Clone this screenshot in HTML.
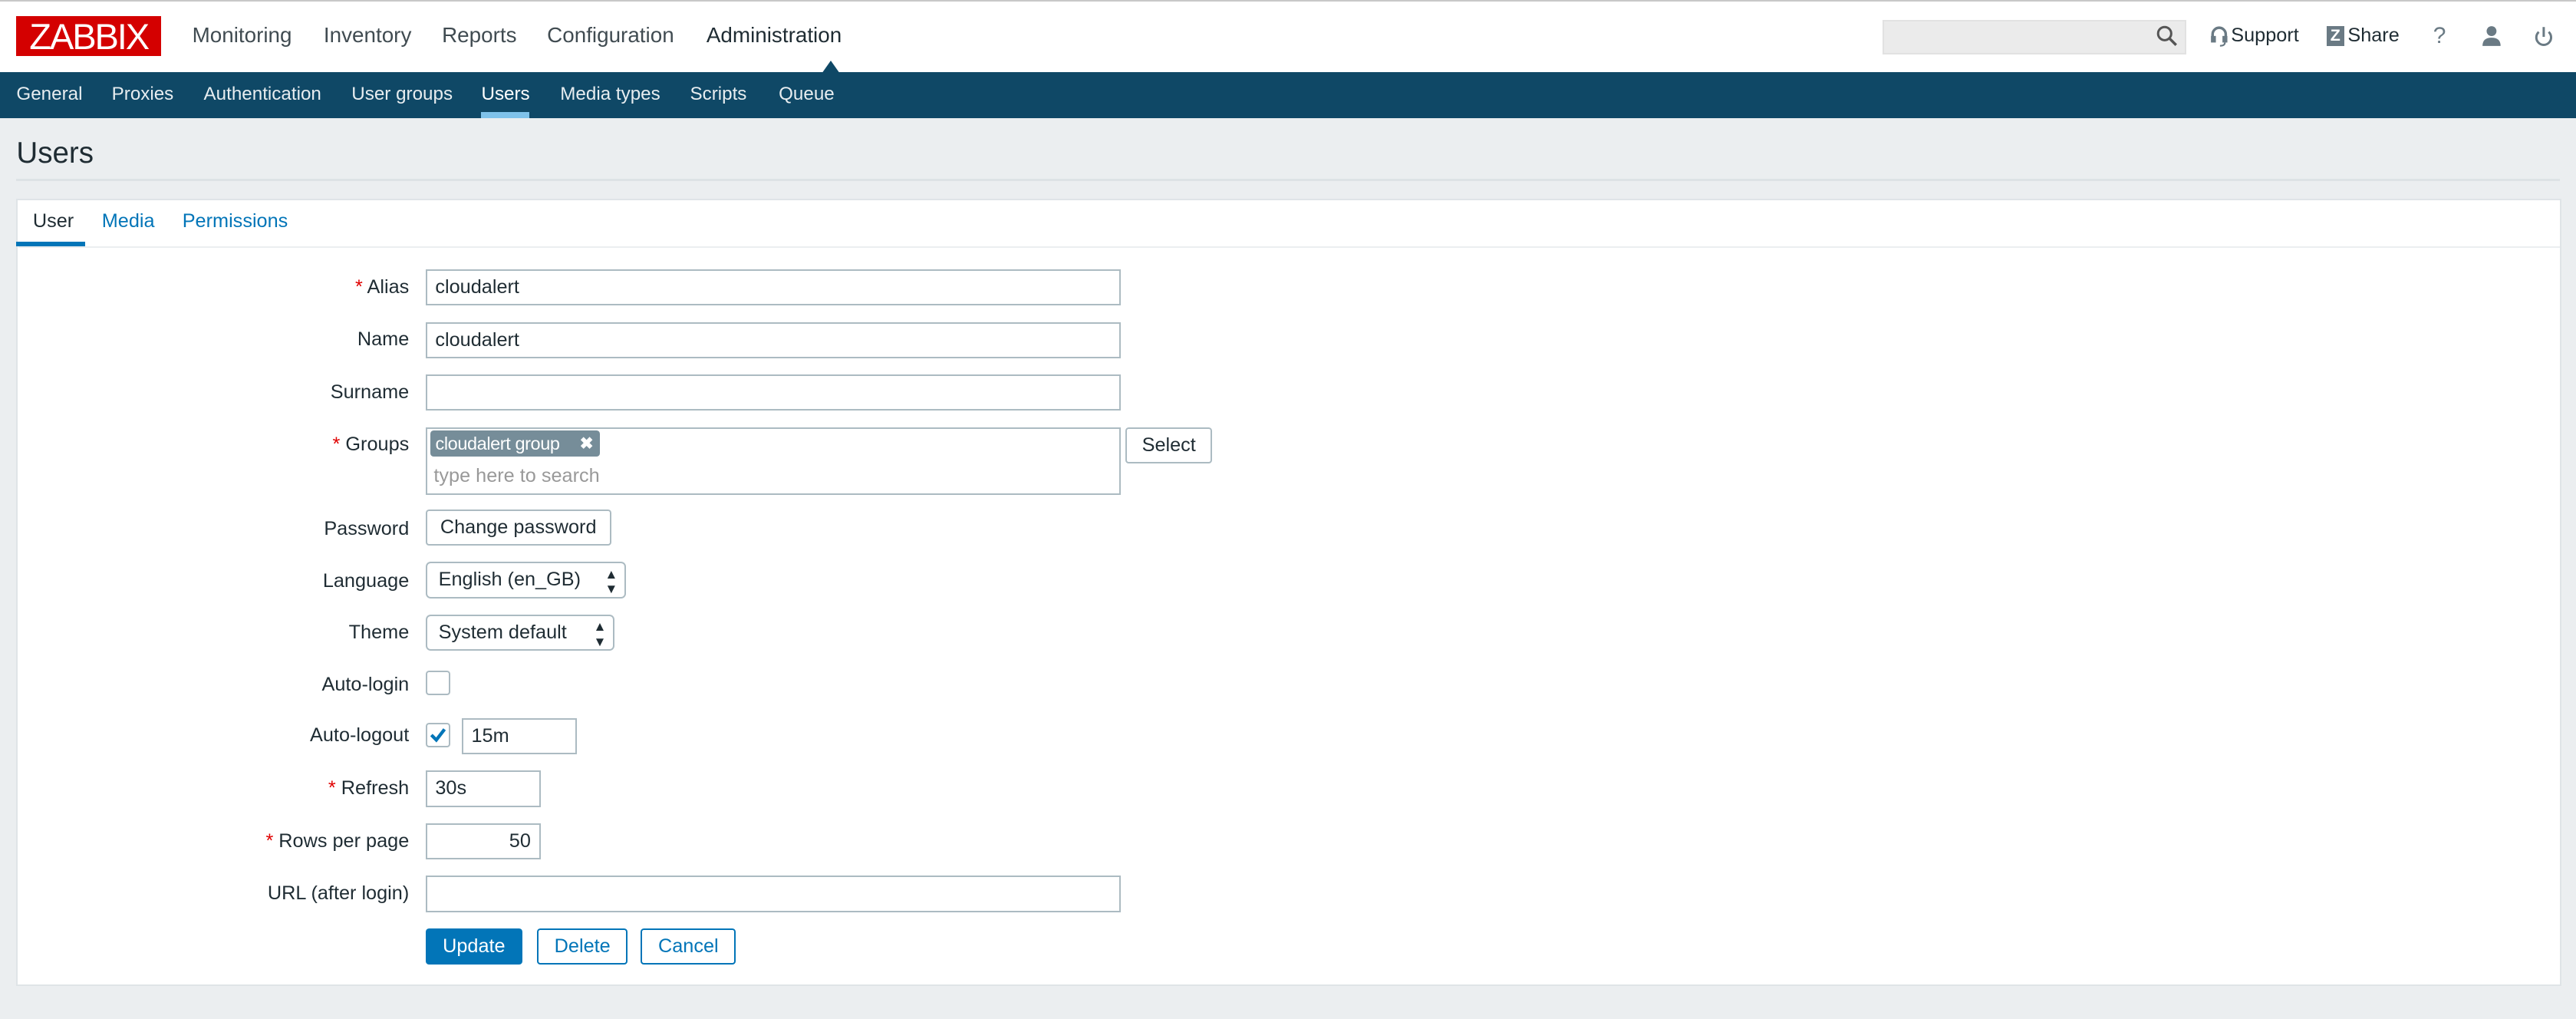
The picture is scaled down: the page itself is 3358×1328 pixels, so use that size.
<!DOCTYPE html>
<html><head><meta charset="utf-8"><style>
html,body{margin:0;padding:0}
body{width:1568px;height:620px;zoom:2.1416;background:#ebeef0;font-family:"Liberation Sans",Arial,sans-serif;color:#1f2c33;position:relative;overflow:hidden}
.a{position:absolute}
.top{left:0;top:0;width:1568px;height:44px;background:#fff;border-top:1px solid #c8c8c8;box-sizing:border-box}
.logo{left:10px;top:10px;width:88px;height:24px;background:#d40000;color:#fff;font-size:22px;line-height:25px;text-align:center;letter-spacing:-1px}
.nav{top:14px;font-size:13px;color:#1f2c33;opacity:.85}
.sub{left:0;top:44px;width:1568px;height:28px;background:#0f4866}
.si{top:51px;font-size:11.3px;color:#fff;opacity:.9}
.lbl{font-size:11.8px;right:1319px;text-align:right;white-space:nowrap}
.req{color:#e00000}
.in{border:1px solid #acbbc2;background:#fff;box-sizing:border-box;height:22px;font-size:11.8px;line-height:20px;padding:0 5px}
.btn{border:1px solid #acbbc2;border-radius:2px;background:#fff;box-sizing:border-box;height:22px;font-size:11.8px;line-height:20px;text-align:center;white-space:nowrap}
.bb{border-color:#0275b8;color:#0275b8}
</style></head><body>
<div class="a top"></div>
<div class="a logo">ZABBIX</div>
<div class="a nav" style="left:117px">Monitoring</div>
<div class="a nav" style="left:197px">Inventory</div>
<div class="a nav" style="left:269px">Reports</div>
<div class="a nav" style="left:333px">Configuration</div>
<div class="a nav" style="left:430px;opacity:1">Administration</div>
<div class="a" style="left:500px;top:37px;width:0;height:0;border-left:6px solid transparent;border-right:6px solid transparent;border-bottom:8px solid #0f4866"></div>
<div class="a" style="left:1146px;top:12px;width:185px;height:21px;background:#ebebeb;border:1px solid #e2e2e2;box-sizing:border-box"></div>
<svg class="a" style="left:1312px;top:15px" width="14" height="14" viewBox="0 0 14 14"><circle cx="5.5" cy="5.5" r="4" fill="none" stroke="#555" stroke-width="1.4"/><path d="M8.5 8.5L12.5 12.5" stroke="#555" stroke-width="1.6"/></svg>
<svg class="a" style="left:1345px;top:16px" width="12" height="13" viewBox="0 0 12 13"><path d="M2 7V5a4 4 0 0 1 8 0v2" fill="none" stroke="#6a7a84" stroke-width="1.6"/><rect x="1" y="6" width="3" height="4" fill="#6a7a84"/><rect x="8" y="6" width="3" height="4" fill="#6a7a84"/><path d="M9.5 10q0 2-3 2" fill="none" stroke="#6a7a84" stroke-width="1"/></svg>
<div class="a" style="left:1358px;top:15px;font-size:11.8px">Support</div>
<div class="a" style="left:1416px;top:16px;width:11px;height:12px;background:#6a7a84;color:#fff;font-size:10px;font-weight:bold;line-height:12px;text-align:center">Z</div>
<div class="a" style="left:1429px;top:15px;font-size:11.8px">Share</div>
<div class="a" style="left:1481px;top:14px;font-size:14px;color:#6a7a84">?</div>
<svg class="a" style="left:1510px;top:15px" width="13" height="14" viewBox="0 0 13 14"><circle cx="6.5" cy="4" r="3" fill="#6a7a84"/><path d="M1 13q0-5 5.5-5t5.5 5z" fill="#6a7a84"/></svg>
<svg class="a" style="left:1542px;top:15px" width="13" height="14" viewBox="0 0 13 14"><path d="M3.5 4.5a4.5 4.5 0 1 0 6 0" fill="none" stroke="#6a7a84" stroke-width="1.4"/><path d="M6.5 1.5v6" stroke="#6a7a84" stroke-width="1.4"/></svg>
<div class="a sub"></div>
<div class="a si" style="left:10px">General</div>
<div class="a si" style="left:68px">Proxies</div>
<div class="a si" style="left:124px">Authentication</div>
<div class="a si" style="left:214px">User groups</div>
<div class="a si" style="left:293px;opacity:1">Users</div>
<div class="a" style="left:293px;top:68px;width:29px;height:4px;background:#7fc2ea"></div>
<div class="a si" style="left:341px">Media types</div>
<div class="a si" style="left:420px">Scripts</div>
<div class="a si" style="left:474px">Queue</div>
<div class="a" style="left:10px;top:83px;font-size:18px;color:#1f2c33">Users</div>
<div class="a" style="left:10px;top:109px;width:1548px;height:1px;background:#dde2e5"></div>
<div class="a" style="left:10px;top:121px;width:1549px;height:479px;background:#fff;border:1px solid #dfe4e7;box-sizing:border-box"></div>
<div class="a" style="left:11px;top:150px;width:1547px;height:1px;background:#ebeef0"></div>
<div class="a" style="left:20px;top:128px;font-size:11.8px">User</div>
<div class="a" style="left:62px;top:128px;font-size:11.8px;color:#0275b8">Media</div>
<div class="a" style="left:111px;top:128px;font-size:11.8px;color:#0275b8">Permissions</div>
<div class="a" style="left:10px;top:147px;width:42px;height:3px;background:#0275b8"></div>

<div class="a lbl" style="top:168px"><span class="req">*</span> Alias</div>
<div class="a in" style="left:259px;top:164px;width:423px">cloudalert</div>
<div class="a lbl" style="top:200px">Name</div>
<div class="a in" style="left:259px;top:196px;width:423px">cloudalert</div>
<div class="a lbl" style="top:232px">Surname</div>
<div class="a in" style="left:259px;top:228px;width:423px"></div>
<div class="a lbl" style="top:264px"><span class="req">*</span> Groups</div>
<div class="a in" style="left:259px;top:260px;width:423px;height:41px"></div>
<div class="a" style="left:262px;top:262px;width:103px;height:16px;background:#768d99;border-radius:2px;color:#fff;font-size:11px;line-height:16px;padding-left:3px;box-sizing:border-box;white-space:nowrap;letter-spacing:-0.2px">cloudalert group<b style="position:absolute;right:4px;top:0;font-size:10px">✖</b></div>
<div class="a" style="left:264px;top:283px;font-size:11.8px;color:#999">type here to search</div>
<div class="a btn" style="left:685px;top:260px;width:53px">Select</div>
<div class="a lbl" style="top:315px">Password</div>
<div class="a btn" style="left:259px;top:310px;width:113px">Change password</div>
<div class="a lbl" style="top:347px">Language</div>
<div class="a btn" style="left:259px;top:342px;width:122px;border-radius:3px;text-align:left;padding-left:7px">English (en_GB)<span style="position:absolute;right:4px;top:0;font-size:8px;line-height:9px;padding-top:2px">▲<br>▼</span></div>
<div class="a lbl" style="top:378px">Theme</div>
<div class="a btn" style="left:259px;top:374px;width:115px;border-radius:3px;text-align:left;padding-left:7px">System default<span style="position:absolute;right:4px;top:0;font-size:8px;line-height:9px;padding-top:2px">▲<br>▼</span></div>
<div class="a lbl" style="top:410px">Auto-login</div>
<div class="a" style="left:259px;top:408px;width:15px;height:15px;border:1px solid #acbbc2;border-radius:2px;box-sizing:border-box"></div>
<div class="a lbl" style="top:441px">Auto-logout</div>
<div class="a" style="left:259px;top:440px;width:15px;height:15px;border:1px solid #acbbc2;border-radius:2px;box-sizing:border-box"></div>
<svg class="a" style="left:260px;top:441px" width="13" height="13" viewBox="0 0 13 13"><path d="M2.5 6.5L5.5 9.5L10.5 3" fill="none" stroke="#0275b8" stroke-width="2"/></svg>
<div class="a in" style="left:281px;top:437px;width:70px">15m</div>
<div class="a lbl" style="top:473px"><span class="req">*</span> Refresh</div>
<div class="a in" style="left:259px;top:469px;width:70px">30s</div>
<div class="a lbl" style="top:505px"><span class="req">*</span> Rows per page</div>
<div class="a in" style="left:259px;top:501px;width:70px;text-align:right">50</div>
<div class="a lbl" style="top:537px">URL (after login)</div>
<div class="a in" style="left:259px;top:533px;width:423px"></div>
<div class="a btn" style="left:259px;top:565px;width:59px;background:#0275b8;border-color:#0275b8;color:#fff">Update</div>
<div class="a btn bb" style="left:327px;top:565px;width:55px">Delete</div>
<div class="a btn bb" style="left:390px;top:565px;width:58px">Cancel</div>
</body></html>
